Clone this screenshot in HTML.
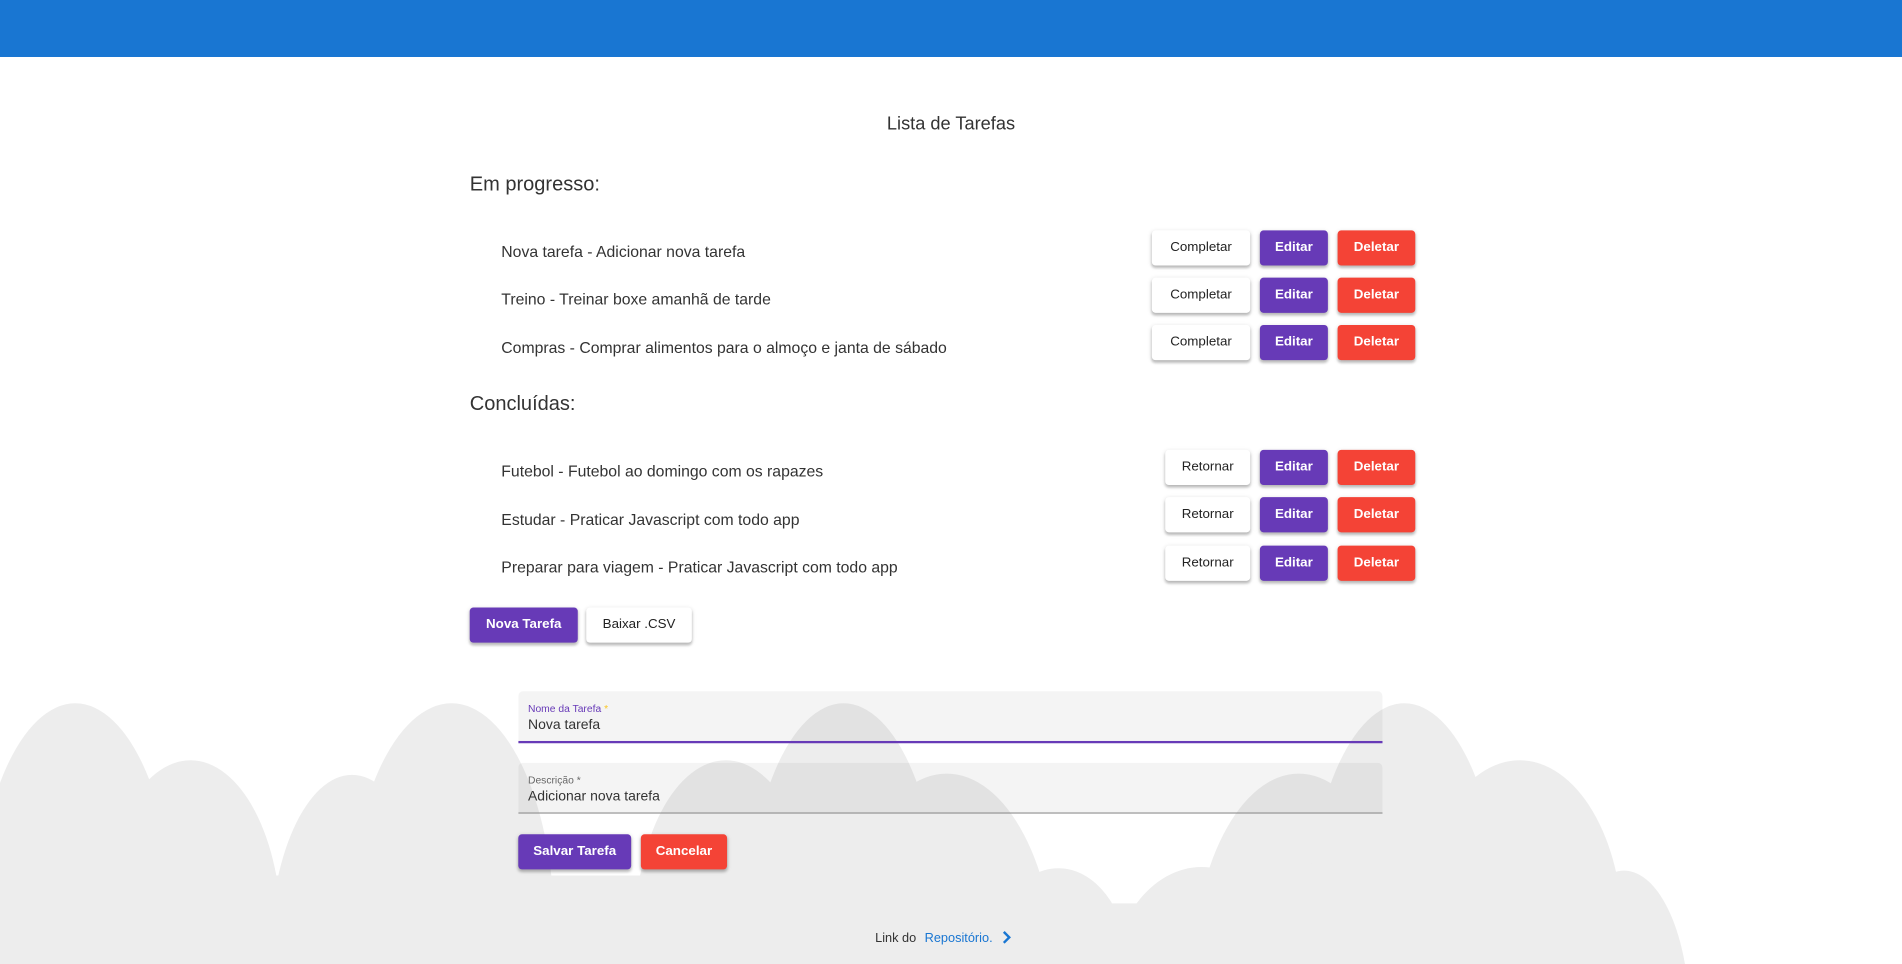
<!DOCTYPE html>
<html><head><meta charset="utf-8"><style>
html,body{margin:0;padding:0;width:1902px;height:964px;overflow:hidden;background:#fff;}
#w{position:absolute;left:0;top:0;width:1567px;height:795px;overflow:hidden;transform:scale(1.21378,1.2126);transform-origin:0 0;font-family:"Liberation Sans",sans-serif;color:rgba(0,0,0,.82);}
.a{position:absolute;white-space:nowrap;}
.hdr{position:absolute;left:0;top:0;width:1567px;height:47px;background:#1976d2;}
.btn{position:absolute;height:29px;line-height:29px;border-radius:3px;font-size:11px;text-align:center;box-shadow:0 2px 2px rgba(0,0,0,.2),0 1px 4px rgba(0,0,0,.14);}
.w{background:#fff;color:#222;}
.p{background:#673ab7;color:#fff;font-weight:bold;}
.r{background:#f44336;color:#fff;font-weight:bold;}
.t{font-size:13px;color:#333;}
.f{position:absolute;left:427px;width:712px;height:41px;background:rgba(0,0,0,.045);border-radius:4px 4px 0 0;}
</style></head><body><div id="w">
<svg class="a" style="left:0;top:0" width="1567" height="795" viewBox="0 0 1567 795">
<g fill="#ededed">
<ellipse cx="62" cy="770" rx="82" ry="190"/>
<ellipse cx="157" cy="770" rx="75" ry="143"/>
<ellipse cx="290" cy="790" rx="68" ry="151"/>
<ellipse cx="372" cy="770" rx="85" ry="190"/>
<ellipse cx="598" cy="770" rx="75" ry="143"/>
<ellipse cx="695" cy="770" rx="80" ry="190"/>
<ellipse cx="780" cy="810" rx="90" ry="172"/>
<ellipse cx="872" cy="805" rx="60" ry="89"/>
<ellipse cx="990" cy="815" rx="75" ry="100"/>
<ellipse cx="1070" cy="810" rx="88" ry="172"/>
<ellipse cx="1157" cy="770" rx="80" ry="190"/>
<ellipse cx="1252" cy="770" rx="85" ry="143"/>
<ellipse cx="1338" cy="840" rx="54" ry="122"/>
<rect x="0" y="722" width="860" height="73"/>
<rect x="990" y="722" width="340" height="73"/>
<rect x="0" y="745" width="1340" height="50"/>
</g></svg>
<div class="hdr"></div>
<div class="a" style="left:0;width:1567px;text-align:center;top:94px;font-size:15px;color:#333;">Lista de Tarefas</div>
<div class="a" style="left:387px;top:143px;font-size:16.5px;color:#333;">Em progresso:</div>
<div class="a t" style="left:413px;top:200px;">Nova tarefa - Adicionar nova tarefa</div>
<div class="a t" style="left:413px;top:239px;">Treino - Treinar boxe amanhã de tarde</div>
<div class="a t" style="left:413px;top:279px;">Compras - Comprar alimentos para o almoço e janta de sábado</div>
<div class="btn w" style="left:949px;top:190px;width:81px;">Completar</div>
<div class="btn p" style="left:1038px;top:190px;width:56px;">Editar</div>
<div class="btn r" style="left:1102px;top:190px;width:64px;">Deletar</div>
<div class="btn w" style="left:949px;top:229px;width:81px;">Completar</div>
<div class="btn p" style="left:1038px;top:229px;width:56px;">Editar</div>
<div class="btn r" style="left:1102px;top:229px;width:64px;">Deletar</div>
<div class="btn w" style="left:949px;top:268px;width:81px;">Completar</div>
<div class="btn p" style="left:1038px;top:268px;width:56px;">Editar</div>
<div class="btn r" style="left:1102px;top:268px;width:64px;">Deletar</div>
<div class="a" style="left:387px;top:324px;font-size:16.5px;color:#333;">Concluídas:</div>
<div class="a t" style="left:413px;top:381px;">Futebol - Futebol ao domingo com os rapazes</div>
<div class="a t" style="left:413px;top:421px;">Estudar - Praticar Javascript com todo app</div>
<div class="a t" style="left:413px;top:460px;">Preparar para viagem - Praticar Javascript com todo app</div>
<div class="btn w" style="left:960px;top:371px;width:70px;">Retornar</div>
<div class="btn p" style="left:1038px;top:371px;width:56px;">Editar</div>
<div class="btn r" style="left:1102px;top:371px;width:64px;">Deletar</div>
<div class="btn w" style="left:960px;top:410px;width:70px;">Retornar</div>
<div class="btn p" style="left:1038px;top:410px;width:56px;">Editar</div>
<div class="btn r" style="left:1102px;top:410px;width:64px;">Deletar</div>
<div class="btn w" style="left:960px;top:450px;width:70px;">Retornar</div>
<div class="btn p" style="left:1038px;top:450px;width:56px;">Editar</div>
<div class="btn r" style="left:1102px;top:450px;width:64px;">Deletar</div>
<div class="btn p" style="left:387px;top:501px;width:89px;">Nova Tarefa</div>
<div class="btn w" style="left:483px;top:501px;width:87px;">Baixar .CSV</div>
<div class="f" style="top:570px;border-bottom:2px solid #673ab7;"></div>
<div class="a" style="left:435px;top:579px;font-size:8.5px;color:#673ab7;">Nome da Tarefa <span style="color:#f9c623">*</span></div>
<div class="a" style="left:435px;top:592px;font-size:11.5px;color:#333;">Nova tarefa</div>
<div class="f" style="top:629px;border-bottom:1px solid #888;"></div>
<div class="a" style="left:435px;top:638px;font-size:8.5px;color:#666;">Descrição *</div>
<div class="a" style="left:435px;top:651px;font-size:11.5px;color:#333;">Adicionar nova tarefa</div>
<div class="btn p" style="left:427px;top:688px;width:93px;">Salvar Tarefa</div>
<div class="btn r" style="left:528px;top:688px;width:71px;">Cancelar</div>
<div class="a" style="left:721px;top:767px;font-size:10.5px;color:#333;">Link do <span style="color:#1976d2;margin-left:4px;">Repositório.</span>
<svg width="10" height="12" viewBox="0 0 10 12" style="vertical-align:-2px;margin-left:3px"><path d="M3 1.5 L7.5 6 L3 10.5" stroke="#1976d2" stroke-width="2" fill="none"/></svg></div>
</div></body></html>
